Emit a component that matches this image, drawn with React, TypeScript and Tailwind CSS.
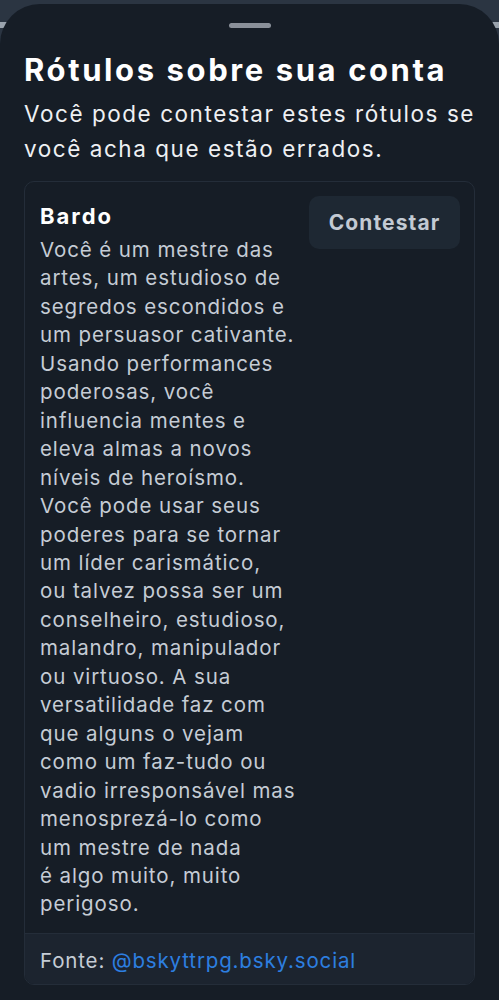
import React from "react";

const lines = [
  "Você é um mestre das",
  "artes, um estudioso de",
  "segredos escondidos e",
  "um persuasor cativante.",
  "Usando performances",
  "poderosas, você",
  "influencia mentes e",
  "eleva almas a novos",
  "níveis de heroísmo.",
  "Você pode usar seus",
  "poderes para se tornar",
  "um líder carismático,",
  "ou talvez possa ser um",
  "conselheiro, estudioso,",
  "malandro, manipulador",
  "ou virtuoso. A sua",
  "versatilidade faz com",
  "que alguns o vejam",
  "como um faz-tudo ou",
  "vadio irresponsável mas",
  "menosprezá-lo como",
  "um mestre de nada",
  "é algo muito, muito",
  "perigoso.",
];

export default function App() {
  return (
    <div
      className="w-[499px] h-[1000px] overflow-hidden bg-[#2b3542] relative"
      style={{ fontFamily: "Inter, 'Noto Sans', sans-serif" }}
    >
      <div className="absolute left-0 right-0 top-[22px] h-[6px] bg-[#9aa3ad]" />
      <div className="relative mt-[4px] h-[996px] rounded-t-[40px] bg-[#161d26] px-[24px]">
        <div className="flex justify-center pt-[19px]">
          <div className="w-[42px] h-[5px] rounded-full bg-[#8a9099]" />
        </div>
        <h1 className="mt-[22px] text-[31px] leading-[40px] font-bold text-white tracking-[2.6px] whitespace-nowrap">
          Rótulos sobre sua conta
        </h1>
        <p className="mt-[6px] text-[22.5px] leading-[35px] text-[#eef0f3] tracking-[1.55px]">
          <span className="block whitespace-nowrap">Você pode contestar estes rótulos se</span>
          <span className="block whitespace-nowrap">você acha que estão errados.</span>
        </p>
        <div className="mt-[15px] rounded-[10px] border border-[#242d39] overflow-hidden">
          <div className="flex justify-between pl-[15px] pr-[14px] pt-[14px] pb-[14px]">
            <div className="pt-[5px]">
              <div className="text-[22px] leading-[30px] font-bold text-white tracking-[2px]">Bardo</div>
              <div className="mt-[5px] text-[20.5px] leading-[28.45px] text-[#c5ccd5] tracking-[0.9px]">
                {lines.map((l) => (
                  <span key={l} className="block whitespace-nowrap">{l}</span>
                ))}
              </div>
            </div>
            <div>
              <button className="w-[151px] h-[53px] rounded-[10px] bg-[#1e2833] text-[21px] font-bold text-[#c3cad3] tracking-[1.1px]">
                Contestar
              </button>
            </div>
          </div>
          <div className="bg-[#1c242f] border-t border-[#242d39] pl-[15px] pt-[5px] h-[51px] flex items-center text-[20.5px] text-[#c5ccd5] tracking-[0.85px] whitespace-nowrap">
            <span>Fonte:&nbsp;</span>
            <span className="text-[#2d7fe0]">@bskyttrpg.bsky.social</span>
          </div>
        </div>
      </div>
    </div>
  );
}
